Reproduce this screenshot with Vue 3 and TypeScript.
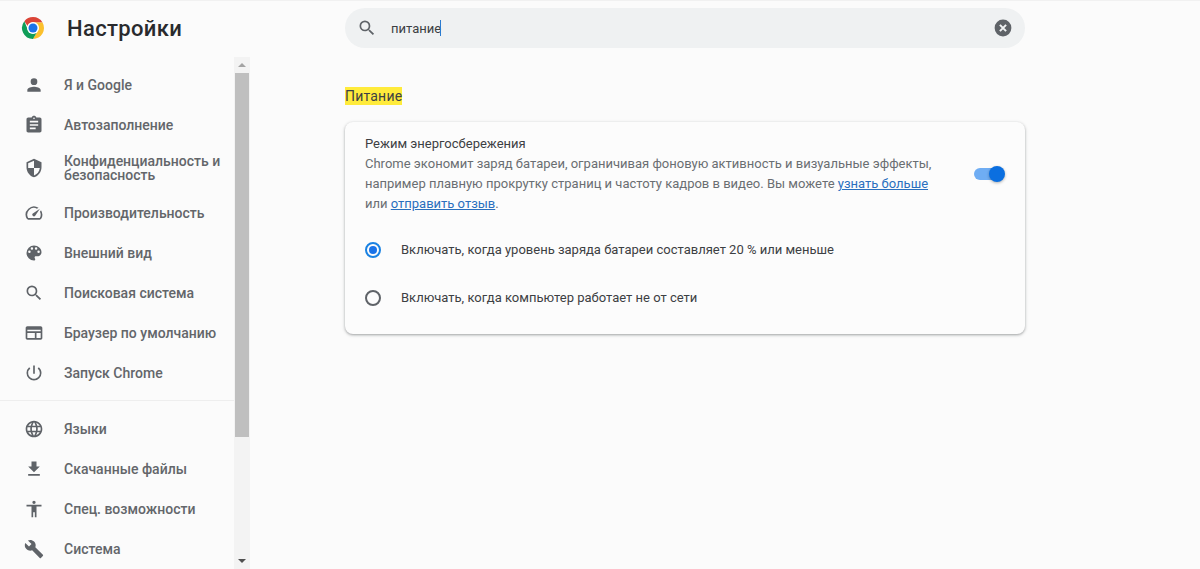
<script setup lang="ts">
interface NavItem { label: string; path: string; tall?: boolean }
const groupA: NavItem[] = [
  { label: 'Я и Google', path: 'M12 12a4 4 0 1 0 0-8 4 4 0 0 0 0 8zm0 2c-2.7 0-8 1.3-8 4v2h16v-2c0-2.7-5.3-4-8-4z' },
  { label: 'Автозаполнение', path: 'M19 3h-4.2C14.4 1.8 13.3 1 12 1s-2.4.8-2.8 2H5c-1.1 0-2 .9-2 2v14c0 1.1.9 2 2 2h14c1.1 0 2-.9 2-2V5c0-1.1-.9-2-2-2zm-7 0c.55 0 1 .45 1 1s-.45 1-1 1-1-.45-1-1 .45-1 1-1zm2 14H7v-2h7v2zm3-4H7v-2h10v2zm0-4H7V7h10v2z' },
  { label: 'Конфиденциальность и безопасность', tall: true, path: 'M12 1 3 5v6c0 5.55 3.84 10.74 9 12 5.16-1.26 9-6.45 9-12V5l-9-4zm0 10.99h7c-.53 4.12-3.28 7.79-7 8.94V12H5V6.3l7-3.11v8.8z' },
  { label: 'Производительность', path: 'M20.38 8.57l-1.23 1.85a8 8 0 0 1-.22 7.58H5.07A8 8 0 0 1 15.58 6.85l1.85-1.23A10 10 0 0 0 3.35 19a2 2 0 0 0 1.72 1h13.85a2 2 0 0 0 1.74-1 10 10 0 0 0-.27-10.44zM10.59 15.41a2 2 0 0 0 2.83 0l5.66-8.49-8.49 5.66a2 2 0 0 0 0 2.83z' },
  { label: 'Внешний вид', path: 'M12 3a9 9 0 0 0 0 18c.83 0 1.5-.67 1.5-1.5 0-.39-.15-.74-.39-1.01-.23-.26-.38-.61-.38-.99 0-.83.67-1.5 1.5-1.5H16c2.76 0 5-2.24 5-5 0-4.42-4.03-8-9-8zm-5.5 9a1.5 1.5 0 1 1 0-3 1.5 1.5 0 0 1 0 3zm3-4a1.5 1.5 0 1 1 0-3 1.5 1.5 0 0 1 0 3zm5 0a1.5 1.5 0 1 1 0-3 1.5 1.5 0 0 1 0 3zm3 4a1.5 1.5 0 1 1 0-3 1.5 1.5 0 0 1 0 3z' },
  { label: 'Поисковая система', path: 'M15.5 14h-.79l-.28-.27A6.47 6.47 0 0 0 16 9.5 6.5 6.5 0 1 0 9.5 16c1.61 0 3.09-.59 4.23-1.57l.27.28v.79l5 4.99L20.49 19l-4.99-5zm-6 0C7.01 14 5 11.99 5 9.5S7.01 5 9.5 5 14 7.01 14 9.5 11.99 14 9.5 14z' },
  { label: 'Браузер по умолчанию', path: 'M20 4H4c-1.1 0-2 .9-2 2v12c0 1.1.9 2 2 2h16c1.1 0 2-.9 2-2V6c0-1.1-.9-2-2-2zM4 18v-6h9v6H4zm16 0h-5v-6h5v6zm0-8H4V8h16v2z' },
  { label: 'Запуск Chrome', path: 'M13 3h-2v10h2V3zm4.83 2.17-1.42 1.42A6.92 6.92 0 0 1 19 12c0 3.87-3.13 7-7 7s-7-3.13-7-7a6.92 6.92 0 0 1 2.58-5.42L6.17 5.17A8.93 8.93 0 0 0 3 12a9 9 0 0 0 18 0c0-2.74-1.23-5.18-3.17-6.83z' },
]
const groupB: NavItem[] = [
  { label: 'Языки', path: 'M11.99 2C6.47 2 2 6.48 2 12s4.47 10 9.99 10C17.52 22 22 17.52 22 12S17.52 2 11.99 2zm6.93 6h-2.95a15.65 15.65 0 0 0-1.38-3.56A8.03 8.03 0 0 1 18.92 8zM12 4.04c.83 1.2 1.48 2.53 1.91 3.96h-3.82c.43-1.43 1.08-2.76 1.91-3.96zM4.26 14C4.1 13.36 4 12.69 4 12s.1-1.36.26-2h3.38c-.08.66-.14 1.32-.14 2s.06 1.34.14 2H4.26zm.82 2h2.95c.32 1.25.78 2.45 1.38 3.56A7.987 7.987 0 0 1 5.08 16zm2.95-8H5.08a7.987 7.987 0 0 1 4.33-3.56A15.65 15.65 0 0 0 8.03 8zM12 19.96c-.83-1.2-1.48-2.53-1.91-3.96h3.82c-.43 1.43-1.08 2.76-1.91 3.96zM14.34 14H9.66c-.09-.66-.16-1.32-.16-2s.07-1.35.16-2h4.68c.09.65.16 1.32.16 2s-.07 1.34-.16 2zm.25 5.56c.6-1.11 1.06-2.31 1.38-3.56h2.95a8.03 8.03 0 0 1-4.33 3.56zM16.36 14c.08-.66.14-1.32.14-2s-.06-1.34-.14-2h3.38c.16.64.26 1.31.26 2s-.1 1.36-.26 2h-3.38z' },
  { label: 'Скачанные файлы', path: 'M19 9h-4V3H9v6H5l7 7 7-7zM5 18v2h14v-2H5z' },
  { label: 'Спец. возможности', path: 'M12 2a2 2 0 1 1 0 4 2 2 0 0 1 0-4zm9 7h-6v13h-2v-6h-2v6H9V9H3V7h18v2z' },
  { label: 'Система', path: 'M22.7 19l-9.1-9.1c.9-2.3.4-5-1.5-6.9-2-2-5-2.4-7.4-1.3L9 6 6 9 1.6 4.7C.4 7.1.9 10.1 2.9 12.1c1.9 1.9 4.6 2.4 6.9 1.5l9.1 9.1c.4.4 1 .4 1.4 0l2.3-2.3c.5-.4.5-1.1.1-1.4z' },
]
</script>

<template>
  <div class="page">
    <aside class="side">
      <div class="brand">
        <svg class="logo" viewBox="0 0 48 48" width="24" height="24" aria-hidden="true">
          <path fill="#db4437" d="M24 2a22 22 0 0 1 19.05 11H24a11 11 0 0 0-10.4 7.4L6.7 10.4A22 22 0 0 1 24 2z" />
          <path fill="#fbc02d" d="M43.05 13A22 22 0 0 1 24 46l9.5-16.5A11 11 0 0 0 33.5 18.5 11 11 0 0 0 24 13z" />
          <path fill="#0f9d58" d="M6.7 10.4A22 22 0 0 0 24 46l9.5-16.5A11 11 0 0 1 14.5 29.5z" />
          <circle cx="24" cy="24" r="12" fill="#fff" />
          <circle cx="24" cy="24" r="9" fill="#1a73e8" />
        </svg>
        <h1 class="title">Настройки</h1>
      </div>
      <div class="side-body">
        <nav class="nav">
          <ul class="group">
            <li v-for="it in groupA" :key="it.label" class="item" :class="{ tall: it.tall }">
              <svg class="nav-icon" viewBox="0 0 24 24" width="20" height="20" aria-hidden="true"><path :d="it.path" /></svg>
              <span class="nav-label">{{ it.label }}</span>
            </li>
          </ul>
          <div class="divider"></div>
          <ul class="group">
            <li v-for="it in groupB" :key="it.label" class="item">
              <svg class="nav-icon" viewBox="0 0 24 24" width="20" height="20" aria-hidden="true"><path :d="it.path" /></svg>
              <span class="nav-label">{{ it.label }}</span>
            </li>
          </ul>
        </nav>
        <div class="scrollbar">
          <div class="arrow"><span class="tri up"></span></div>
          <div class="track"><div class="thumb"></div></div>
          <div class="arrow"><span class="tri down"></span></div>
        </div>
      </div>
    </aside>

    <main class="main">
      <div class="column">
        <div class="search">
          <svg class="search-icon" viewBox="0 0 24 24" width="20" height="20" aria-hidden="true"><path d="M15.5 14h-.79l-.28-.27A6.47 6.47 0 0 0 16 9.5 6.5 6.5 0 1 0 9.5 16c1.61 0 3.09-.59 4.23-1.57l.27.28v.79l5 4.99L20.49 19l-4.99-5zm-6 0C7.01 14 5 11.99 5 9.5S7.01 5 9.5 5 14 7.01 14 9.5 11.99 14 9.5 14z" /></svg>
          <span class="query">питание</span><span class="caret"></span>
          <svg class="clear" viewBox="0 0 20 20" width="20" height="20" aria-hidden="true">
            <circle cx="10" cy="10" r="8.4" fill="#5f6368" />
            <path d="M6.9 6.9l6.2 6.2M13.1 6.9l-6.2 6.2" stroke="#f1f3f4" stroke-width="2" fill="none" />
          </svg>
        </div>

        <h2 class="section"><mark class="hl">Питание</mark></h2>

        <section class="card">
          <div class="head">
            <div class="desc">
              <div class="desc-title">Режим энергосбережения</div>
              <div class="desc-text">
                Chrome экономит заряд батареи, ограничивая фоновую активность и визуальные эффекты, например плавную прокрутку страниц и частоту кадров в видео. Вы можете <a class="link">узнать больше</a> или <a class="link">отправить отзыв</a>.
              </div>
            </div>
            <div class="toggle"><span class="knob"></span></div>
          </div>
          <div class="option first">
            <span class="radio on"><span class="dot"></span></span>
            <span class="option-text">Включать, когда уровень заряда батареи составляет 20 % или меньше</span>
          </div>
          <div class="option">
            <span class="radio"></span>
            <span class="option-text">Включать, когда компьютер работает не от сети</span>
          </div>
        </section>
      </div>
    </main>
  </div>
</template>

<style>
html, body { margin: 0; height: 100%; overflow: hidden; background: #fbfbfb; }
</style>

<style scoped>
.page {
  display: flex;
  height: 569px;
  overflow: hidden;
  background: #fbfbfb;
  border-top: 1px solid #f1f1f1;
  box-sizing: border-box;
  font-family: Roboto, "Noto Sans", sans-serif;
  color: #202124;
}
.side {
  width: 250px;
  flex: none;
  display: flex;
  flex-direction: column;
  min-height: 0;
}
.brand {
  height: 56px;
  flex: none;
  display: flex;
  align-items: center;
  padding-left: 21px;
  box-sizing: border-box;
}
.logo { flex: none; margin-top: -2px; }
.title {
  margin: -1px 0 0 22px;
  font-size: 22px;
  font-weight: 500;
  letter-spacing: 0.35px;
  color: #292a2d;
}
.side-body {
  flex: 1;
  min-height: 0;
  display: flex;
}
.nav {
  flex: 1;
  min-width: 0;
  padding-top: 8px;
  overflow: hidden;
}
.group { list-style: none; margin: 0; padding: 0; }
.item {
  display: flex;
  align-items: center;
  min-height: 40px;
  padding: 0 12px 0 24px;
  box-sizing: border-box;
}
.item.tall { min-height: 48px; padding-bottom: 2px; }
.nav-icon { flex: none; fill: #5f6368; margin-right: 20px; }
.nav-label {
  font-size: 14px;
  line-height: 14px;
  font-weight: 500;
  color: #63666a;
}
.divider { height: 1px; margin: 7px 0 8px; background: #eeeeee; }
.scrollbar {
  width: 16px;
  flex: none;
  display: flex;
  flex-direction: column;
  background: #f3f3f3;
}
.arrow {
  height: 16px;
  flex: none;
  display: flex;
  align-items: center;
  justify-content: center;
}
.tri { width: 0; height: 0; border-left: 4px solid transparent; border-right: 4px solid transparent; }
.tri.up { border-bottom: 4px solid #a3a3a3; }
.tri.down { border-top: 4px solid #505050; }
.track { flex: 1; min-height: 0; padding: 0 1px; }
.thumb { height: 364px; background: #bfbfbf; }
.main {
  flex: 1;
  min-width: 0;
  padding-left: 95px;
}
.column { width: 680px; padding-top: 7px; }
.search {
  height: 40px;
  border-radius: 20px;
  background: #eff1f2;
  display: flex;
  align-items: center;
  padding: 0 12px;
}
.search-icon { flex: none; fill: #5f6368; margin-right: 14px; }
.query { font-size: 13px; color: #3c4043; }
.caret { width: 1px; height: 16px; background: #2a7bd0; flex: none; margin-left: -1px; }
.clear { flex: none; margin-left: auto; }
.section {
  margin: 39px 0 0;
  font-size: 14px;
  line-height: 18px;
  font-weight: 400;
  letter-spacing: 0.2px;
  color: #3c4043;
}
.hl { background: #ffeb3b; color: inherit; display: inline-block; }
.card {
  margin-top: 17px;
  height: 212px;
  box-sizing: border-box;
  padding: 14px 20px 0;
  background: #fcfcfc;
  border-radius: 8px;
  box-shadow: 0 1px 2px rgba(60, 64, 67, 0.3), 0 1px 3px 1px rgba(60, 64, 67, 0.15);
}
.head { display: flex; align-items: center; justify-content: space-between; }
.desc { width: 575px; }
.desc-title { font-size: 13px; line-height: 15px; color: #3c4043; }
.desc-text { margin-top: 3px; font-size: 13px; line-height: 20px; color: #6a6e72; }
.link { color: #2a6fbe; text-decoration: underline; }
.toggle {
  position: relative;
  width: 28px;
  height: 12px;
  border-radius: 6px;
  background: #6fadf3;
  margin-top: -2px;
  margin-right: 3px;
}
.knob {
  position: absolute;
  right: -3px;
  top: -2px;
  width: 16px;
  height: 16px;
  border-radius: 50%;
  background: #0b6fe0;
  box-shadow: 0 1px 3px rgba(0, 0, 0, 0.3);
}
.option {
  display: flex;
  align-items: center;
  height: 48px;
  font-size: 13px;
  color: #3c4043;
}
.option.first { margin-top: 12px; }
.option-text { margin-bottom: 2px; }
.radio {
  width: 16px;
  height: 16px;
  box-sizing: border-box;
  border: 2px solid #5f6368;
  border-radius: 50%;
  margin-right: 20px;
  flex: none;
  display: flex;
  align-items: center;
  justify-content: center;
}
.radio.on { border-color: #1a82e2; }
.dot { width: 8px; height: 8px; border-radius: 50%; background: #1a73e8; }
</style>
